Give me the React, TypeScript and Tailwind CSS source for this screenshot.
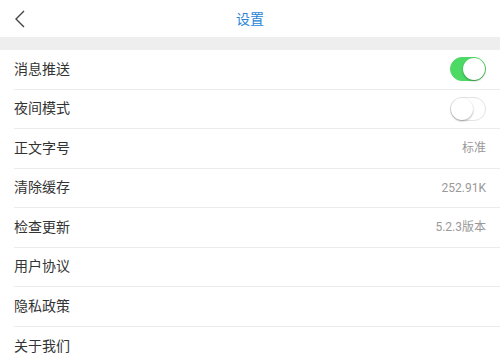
import { useState } from 'react'

type Row = { label: string; value?: string; toggle?: boolean }

const rows: Row[] = [
  { label: '消息推送', toggle: true },
  { label: '夜间模式', toggle: false },
  { label: '正文字号', value: '标准' },
  { label: '清除缓存', value: '252.91K' },
  { label: '检查更新', value: '5.2.3版本' },
  { label: '用户协议' },
  { label: '隐私政策' },
  { label: '关于我们' },
]

function Toggle({ initial }: { initial: boolean }) {
  const [on, setOn] = useState(initial)
  return (
    <button
      type="button"
      onClick={() => setOn(!on)}
      className={`relative h-[24px] w-[36px] rounded-full border ${
        on ? 'border-[#4cd964] bg-[#4cd964]' : 'border-[#e3e3e3] bg-white'
      }`}
    >
      <span
        className={`absolute top-[0px] h-[22px] w-[22px] rounded-full bg-white shadow-[0_1px_2px_rgba(0,0,0,0.35)] ${
          on ? 'left-[12px]' : 'left-[0px]'
        }`}
      />
    </button>
  )
}

export default function App() {
  return (
    <div
      className="min-h-[364px] w-[500px] bg-white"
      style={{ fontFamily: 'Roboto, "Noto Sans CJK SC", sans-serif' }}
    >
      {/* 顶栏 */}
      <header className="relative flex h-[37px] items-center justify-center">
        <svg
          className="absolute left-[13px] top-[10px]"
          width="14"
          height="18"
          viewBox="0 0 14 18"
          fill="none"
          stroke="#444"
          strokeWidth="1.4"
        >
          <path d="M11 1 L3 9 L11 17" />
        </svg>
        <h1 className="text-[14px] leading-none text-[#2a84d8]">设置</h1>
      </header>
      <div className="h-[13px] bg-[#eeeeee]" />

      <ul>
        {rows.map((r, i) => (
          <li key={r.label} className="pl-[14px]">
            <div
              className={`flex h-[39.5px] items-center justify-between pr-[14px] ${
                i < rows.length - 1 ? 'border-b border-[#ececec]' : ''
              }`}
            >
              <span className="text-[14px] text-[#333]">{r.label}</span>
              {r.toggle !== undefined && <Toggle initial={r.toggle} />}
              {r.value && <span className="text-[12px] text-[#999]">{r.value}</span>}
            </div>
          </li>
        ))}
      </ul>
    </div>
  )
}
